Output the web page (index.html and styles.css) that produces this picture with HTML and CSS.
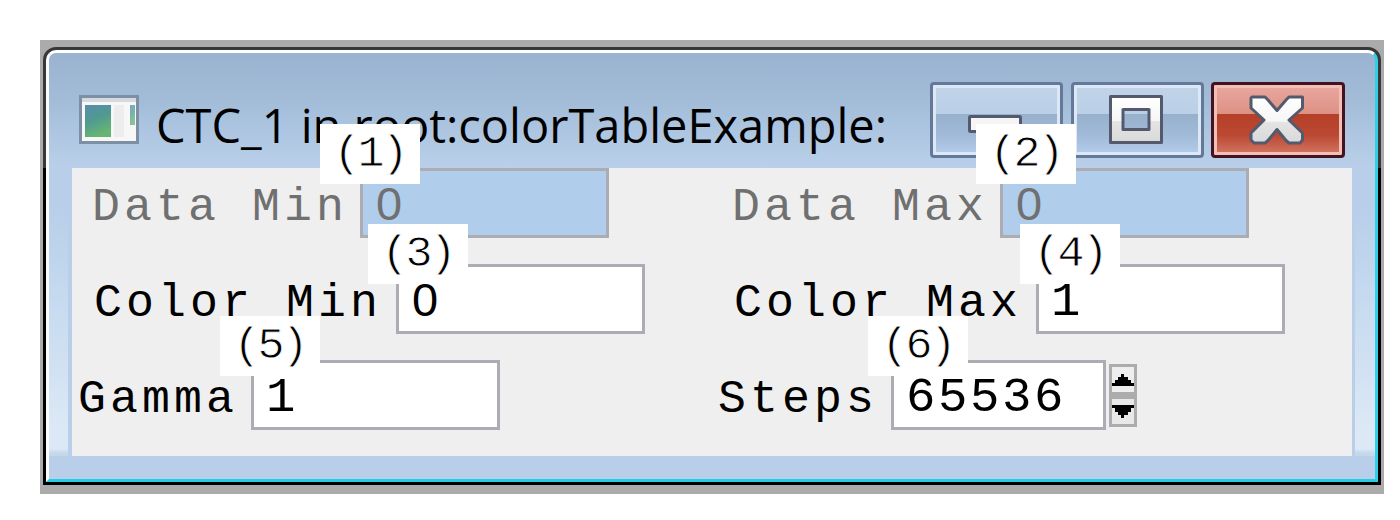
FILE: index.html
```html
<!DOCTYPE html>
<html lang="en">
<head>
<meta charset="utf-8">
<title>CTC_1 in root:colorTableExample:</title>
<link rel="stylesheet" href="styles.css">
</head>
<body>
<main class="backdrop">
  <section class="window">
    <div class="bevel">
      <header class="titlebar">
        <svg class="app-icon" width="60" height="50" viewBox="0 0 60 50">
          <defs>
            <linearGradient id="pane" x1="0" y1="0" x2=".35" y2="1"><stop offset="0" stop-color="#5a8bae"/><stop offset=".5" stop-color="#4f9a91"/><stop offset="1" stop-color="#65b573"/></linearGradient>
          </defs>
          <rect x="1.5" y="1.5" width="57" height="46" fill="#f7f7f7" stroke="#7d8fa5" stroke-width="3"/>
          <rect x="3" y="3" width="54" height="4" fill="#d6d9dd"/>
          <rect x="6" y="10" width="26" height="32" fill="url(#pane)"/>
          <rect x="35" y="10" width="10" height="32" fill="#ededee"/>
          <rect x="51" y="10" width="5" height="20" fill="url(#pane)" opacity=".75"/>
        </svg>
        <h1 class="title"><svg width="736" height="70"><text x="0" y="49" textLength="731" lengthAdjust="spacingAndGlyphs">CTC_1 in root:colorTableExample:</text></svg></h1>
        <div class="controls">
          <button class="control" aria-label="Minimize">
            <svg width="133" height="75" viewBox="0 0 133 75"><rect x="39.500" y="33.500" width="51" height="15" rx="1" fill="#f6f4f4" stroke="#535a6e" stroke-width="3"/></svg>
          </button>
          <button class="control" aria-label="Maximize">
            <svg width="133" height="75" viewBox="0 0 133 75">
              <defs><linearGradient id="metal" x1="0" y1="0" x2="0" y2="1"><stop offset="0" stop-color="#fff"/><stop offset=".53" stop-color="#f6f6f6"/><stop offset=".54" stop-color="#e4e4e4"/><stop offset="1" stop-color="#d9d9d9"/></linearGradient></defs>
              <path fill="url(#metal)" fill-rule="evenodd" stroke="#535a6e" stroke-width="3" stroke-linejoin="round" d="M39.500 13.500h51v46h-51zM52 26.500h26v20h-26z"/>
            </svg>
          </button>
          <button class="control close" aria-label="Close">
            <svg width="134" height="75" viewBox="0 0 134 75"><path fill="url(#metal)" stroke="#535a6e" stroke-width="3" stroke-linejoin="round" d="M41 14H54L57 17 66 27.500 75 17 78 14H91.500V25L78 37 91.500 50V57L89 60H78L75 57.500 66 46.500 57 57.500 54 60H43L40 57V50L53 37 40 25V15z"/></svg>
          </button>
        </div>
      </header>
      <div class="body">
        <div class="rail rail-left"></div>
        <div class="panel">
          <div class="cell data off"><span class="label">Data Min</span><span class="field zero">0</span></div>
          <div class="cell data off"><span class="label">Data Max</span><span class="field zero">0</span></div>
          <div class="cell color"><span class="label">Color Min</span><span class="field zero">0</span></div>
          <div class="cell color"><span class="label">Color Max</span><span class="field">1</span></div>
          <div class="cell gamma"><span class="label">Gamma</span><span class="field">1</span></div>
          <div class="cell gamma"><span class="label">Steps</span><span class="field steps">65536</span>
            <svg class="spinner" width="28" height="64" viewBox="0 0 28 64" shape-rendering="crispEdges">
              <rect width="28" height="63" fill="#acacac"/>
              <rect x="3" y="3" width="22" height="25" fill="#eee"/>
              <rect x="3" y="35" width="22" height="25" fill="#e8e8e8"/>
              <path d="M3 22v-3h3v-3h3v-3h3v-3h3v3h4v3h3v3h3v3zM3 41h22v3h-3v4h-3v3h-4v3h-3v-3h-3v-3h-3v-4h-3z"/>
            </svg>
          </div>
        </div>
        <div class="rail rail-right"></div>
      </div>
    </div>
  </section>
</main>
<span class="callout c1">(1)</span>
<span class="callout c2">(2)</span>
<span class="callout c3">(3)</span>
<span class="callout c4">(4)</span>
<span class="callout c5">(5)</span>
<span class="callout c6">(6)</span>
</body>
</html>
```
FILE: styles.css
```css
* { box-sizing: border-box; }
body { margin: 0; padding: 40px 16px 0 40px; width: 1400px; height: 520px; overflow: hidden; background: #fff; position: relative; }
.backdrop { width: 1344px; height: 454px; padding: 7px 3px 9px; background: #ababab; }
.window { width: 1338px; height: 438px; padding: 3px; border-radius: 13px 13px 0 0; background: linear-gradient(#383838 0 121px, #000 121px); }
.bevel { height: 432px; border: 3px solid; border-color: #fff #2fcfe8 #27cbe3 #fafcff; border-radius: 10px 10px 0 0; background: linear-gradient(#9ab3d0, #a3bdd9 50px, #b9cfe9 112px, #b9cfe9); overflow: hidden; }
.titlebar { display: flex; align-items: flex-start; height: 115px; padding-left: 30px; }
.app-icon { margin-top: 42px; }
.title { margin: 41px 0 0 17px; width: 774px; height: 70px; font: 400 48px "Open Sans", "Noto Sans", sans-serif; }
.title svg { display: block; overflow: visible; }
.controls { display: flex; gap: 8px; margin-top: 29px; }
.control { width: 133px; height: 76px; padding: 0; border: 3px solid #64789a; border-radius: 4px; background: linear-gradient(#c1d3e8, #bad0e7 29px, #98b0cc 29px, #a0bad8 50px, #b5cdea); box-shadow: inset 0 0 0 3px #dce8f5; }
.control svg { display: block; margin: -3px; }
.close { width: 134px; margin-left: -1px; border-color: #45131f; background: linear-gradient(#eaa89f, #dd9185 29px, #b5402a 29px, #bb4832 50px, #d37864); box-shadow: inset 0 0 0 3px #f2bfb6; }
.body { display: flex; height: 288px; }
.rail { width: 23px; background: linear-gradient(#b9cfe9 0 40px, #bfd5ed 90px, #dce8f5 260px, #dce8f5 281px, #c4d8ea 285px); }
.rail-left { border-right: 4px solid #b9cfe9; }
.rail-right { border-left: 3px solid #b9cfe9; }
.panel { display: grid; grid-template-columns: 640px 640px; grid-template-rows: repeat(3, 96px); width: 1280px; background: #efefef; }
.cell { display: flex; color: #000; font: 46px/70px "Liberation Mono", monospace; white-space: pre; }
.label { letter-spacing: 4.100px; font-size: 46.500px; line-height: 80px; }
.field { height: 70px; width: 249px; padding-left: 12px; border: 3px solid #abacb4; background: #fff; font-size: 49px; line-height: 71px; letter-spacing: 2.600px; }
.zero { padding-left: 13px; font-family: "Liberation Sans", sans-serif; font-size: 47px; line-height: 66px; }
.data { padding-left: 20px; }
.data .label { width: 268px; }
.color { padding-left: 22px; }
.color .label { width: 302px; }
.gamma { padding-left: 6px; }
.gamma .label { width: 173px; }
.off { color: #707070; }
.off .field { background: #b0cdeb; }
.cell .steps { width: 215px; }
.spinner { margin: 4px 0 0 3px; }
.callout { position: absolute; width: 100px; height: 60px; background: #fff; text-align: center; font: 45px/61px "Liberation Mono", monospace; letter-spacing: -3px; text-indent: -1px; -webkit-text-stroke: .8px #fff; }
.c1 { left: 320px; top: 124px; }
.c2 { left: 976px; top: 124px; }
.c3 { left: 368px; top: 224px; }
.c4 { left: 1020px; top: 224px; }
.c5 { left: 220px; top: 316px; }
.c6 { left: 868px; top: 316px; }
```
